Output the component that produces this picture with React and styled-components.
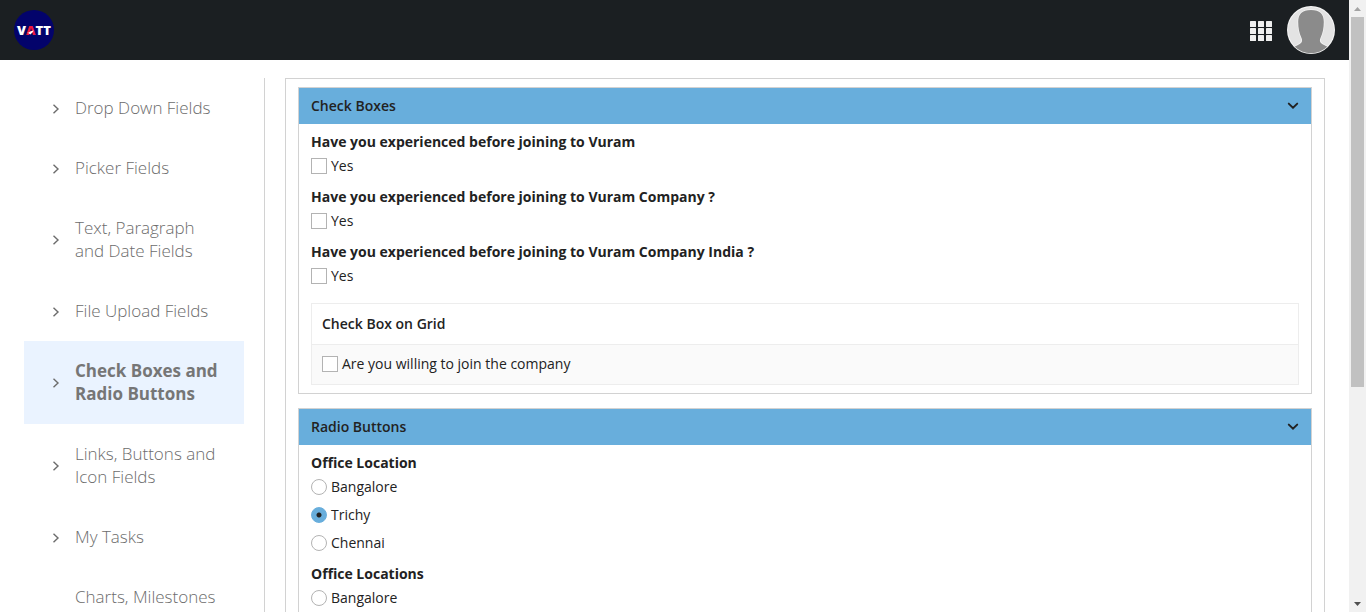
import React, { useId, useState } from "react";
import styled, { createGlobalStyle } from "styled-components";

const GlobalStyle = createGlobalStyle`
  * { box-sizing: border-box; }
  body {
    margin: 0;
    background: #fff;
    color: #222;
    font-family: "Open Sans", sans-serif;
    font-size: 14px;
    line-height: 20px;
  }
`;

const Screen = styled.div`
  display: flex;
  height: 100vh;
  overflow: hidden;
`;

const Page = styled.div`
  flex: 1;
  min-width: 0;
  overflow: hidden;
`;

const TopBar = styled.header`
  display: flex;
  align-items: center;
  gap: 15px;
  height: 60px;
  padding: 0 14px;
  background: #1b1f22;
`;

const HomeLink = styled.a`
  display: flex;
  margin-right: auto;
`;

const BarButton = styled.button`
  display: flex;
  padding: 0;
  border: 0;
  background: none;
  cursor: pointer;
`;

const Columns = styled.div`
  display: flex;
  align-items: stretch;
  padding: 18px 24px;
`;

const SideNav = styled.nav`
  flex: 0 0 241px;
  padding-right: 20px;
  border-right: 1px solid #d2d2d2;
`;

const NavLink = styled.a`
  display: flex;
  align-items: center;
  padding: 18px 20px 19px 28px;
  gap: 15px;
  color: ${(p) => (p.$active ? "#767676" : "#6c6c6c")};
  background: ${(p) => (p.$active ? "#eaf3ff" : "transparent")};
  font-size: 17px;
  font-weight: ${(p) => (p.$active ? 700 : 300)};
  line-height: 23px;
  text-decoration: none;
  &:last-child {
    min-height: 106px;
  }
`;

const NavArrow = styled.svg`
  flex: none;
`;

const NavText = styled.span`
  align-self: flex-start;
  white-space: pre-line;
`;

const Main = styled.main`
  flex: 1;
  min-width: 0;
  display: flex;
  flex-direction: column;
  gap: 14px;
  margin-left: 20px;
  padding: 8px 12px;
  border: 1px solid #d2d2d2;
`;

const Card = styled.section`
  border: 1px solid #d2d2d2;
`;

const CardHeading = styled.h2`
  margin: 0;
`;

const CardToggle = styled.button`
  display: flex;
  align-items: center;
  justify-content: space-between;
  width: 100%;
  height: 36px;
  padding: 0 12px;
  border: 0;
  background: #68aedc;
  color: #222;
  font: 600 14px/20px "Open Sans", sans-serif;
  cursor: pointer;
`;

const CardBody = styled.div`
  display: flex;
  flex-direction: column;
  gap: 11px;
  padding: 8px 12px;
`;

const Group = styled.fieldset`
  min-width: 0;
  margin: 0;
  padding: 0;
  border: 0;
`;

const Legend = styled.legend`
  margin-bottom: 4px;
  padding: 0;
  font-weight: 700;
`;

const Choices = styled.div`
  display: flex;
  flex-direction: column;
  gap: 8px;
`;

const Choice = styled.label`
  display: flex;
  align-items: center;
  gap: 4px;
`;

const CheckInput = styled.input`
  appearance: none;
  flex: none;
  width: 16px;
  height: 16px;
  margin: 0;
  border: 1px solid #b3b3b3;
  background: #fff;
  &:checked {
    border-color: #68aedc;
    background: #68aedc;
  }
`;

const RadioInput = styled(CheckInput)`
  border-radius: 50%;
  &:checked {
    background: radial-gradient(circle, #222 0 2px, #68aedc 3px);
  }
`;

const Grid = styled.table`
  width: 100%;
  margin-top: 6px;
  border: 1px solid #ededed;
  border-collapse: separate;
  border-spacing: 0;
`;

const GridHead = styled.th`
  padding: 10px;
  border-bottom: 1px solid #ededed;
  font-weight: 600;
  text-align: left;
`;

const GridCell = styled.td`
  padding: 9px 10px 10px;
  background: #fafafa;
`;

const ScrollTrack = styled.div`
  flex: 0 0 17px;
  display: flex;
  flex-direction: column;
  align-items: center;
  background: #f1f1f1;
`;

const ScrollThumb = styled.div`
  flex: 0 0 calc(61% - 3px);
  width: 13px;
  margin-bottom: auto;
  background: #c1c1c1;
`;

function Logo() {
  return (
    <svg width="40" height="40" viewBox="0 0 40 40" role="img" aria-label="VATT">
      <circle cx="20" cy="20" r="20" fill="#03036b" />
      <text x="20" y="25" textAnchor="middle" fontFamily="Open Sans, sans-serif" fontSize="13" fontWeight="800" fill="#fff">
        V<tspan fill="#f0183c">A</tspan>TT
      </text>
      <path d="M12.500 22q2 1.500 3 0q2-1.500 4.500-1.500l-3.500 4z" fill="#fff" />
    </svg>
  );
}

function AppsIcon() {
  const steps = [0, 1, 2];
  return (
    <svg width="22" height="22" viewBox="0 -2 22 22" fill="#efefef" aria-hidden="true">
      {steps.map((r) =>
        steps.map((c) => <rect key={`${r}${c}`} x={c * 8} y={r * 7} width="6" height="6" rx="0.5" />)
      )}
    </svg>
  );
}

function Avatar() {
  return (
    <svg width="48" height="48" viewBox="0 0 48 48" aria-hidden="true">
      <defs>
        <clipPath id="avatar-disc"><circle cx="24" cy="24" r="23.3" /></clipPath>
      </defs>
      <circle cx="24" cy="24" r="24" fill="#f5f5f5" />
      <g clipPath="url(#avatar-disc)">
        <circle cx="24" cy="24" r="23" fill="#e3e3e3" />
        <path
          d="M24 4C15 4 11.200 8 11.200 16c0 6 1 11 3.300 16 1.300 3 .5 5-3.500 7l-5 2.500V48h36v-6.500L37 39c-4-2-4.800-4-3.500-7 2.300-5 3.300-10 3.300-16C36.800 8 33 4 24 4z"
          fill="#8b8b8b"
          stroke="#f2f2f2"
          strokeWidth="1.500"
          paintOrder="stroke"
        />
      </g>
    </svg>
  );
}

function Chevron() {
  return (
    <svg width="12" height="9" viewBox="0 0 12 9" fill="none" stroke="#222" strokeWidth="2" strokeLinecap="round" aria-hidden="true">
      <path d="M1.800 1.600 6 5.600 10.200 1.600" />
    </svg>
  );
}

function ScrollArrow({ down }) {
  return (
    <svg width="17" height="17" viewBox="0 0 17 17" fill={down ? "#505050" : "#a3a3a3"} aria-hidden="true">
      <path d={down ? "M5 7h7l-3.5 4z" : "M5 11h7L8.5 7z"} />
    </svg>
  );
}

const NAV = [
  "Drop Down Fields",
  "Picker Fields",
  "Text, Paragraph\nand Date Fields",
  "File Upload Fields",
  "Check Boxes and\nRadio Buttons",
  "Links, Buttons and\nIcon Fields",
  "My Tasks",
  "Charts, Milestones",
];
const ACTIVE = NAV[4];

function Panel({ title, children }) {
  const [open, setOpen] = useState(true);
  return (
    <Card>
      <CardHeading>
        <CardToggle type="button" aria-expanded={open} onClick={() => setOpen(!open)}>
          {title}
          <Chevron />
        </CardToggle>
      </CardHeading>
      {open && <CardBody>{children}</CardBody>}
    </Card>
  );
}

function CheckField({ label }) {
  return (
    <Group>
      <Legend>{label}</Legend>
      <Choice>
        <CheckInput type="checkbox" />
        Yes
      </Choice>
    </Group>
  );
}

function RadioField({ label, options, selected }) {
  const name = useId();
  return (
    <Group>
      <Legend>{label}</Legend>
      <Choices>
        {options.map((o) => (
          <Choice key={o}>
            <RadioInput type="radio" name={name} defaultChecked={o === selected} />
            {o}
          </Choice>
        ))}
      </Choices>
    </Group>
  );
}

export default function App() {
  return (
    <Screen>
      <GlobalStyle />
      <Page>
        <TopBar>
          <HomeLink href="#home"><Logo /></HomeLink>
          <BarButton type="button" aria-label="Apps"><AppsIcon /></BarButton>
          <BarButton type="button" aria-label="Account"><Avatar /></BarButton>
        </TopBar>
        <Columns>
          <SideNav>
            {NAV.map((item) => (
              <NavLink key={item} href="#section" $active={item === ACTIVE}>
                <NavArrow width="8" height="12" viewBox="0 -2 8 12" fill="none" stroke="#6c6c6c" strokeWidth="1.4" aria-hidden="true">
                  <path d="M1.5 .8 6 5 1.5 9.2" />
                </NavArrow>
                <NavText>{item}</NavText>
              </NavLink>
            ))}
          </SideNav>
          <Main>
            <Panel title="Check Boxes">
              <CheckField label="Have you experienced before joining to Vuram" />
              <CheckField label="Have you experienced before joining to Vuram Company ?" />
              <CheckField label="Have you experienced before joining to Vuram Company India ?" />
              <Grid>
                <thead>
                  <tr><GridHead scope="col">Check Box on Grid</GridHead></tr>
                </thead>
                <tbody>
                  <tr>
                    <GridCell>
                      <Choice>
                        <CheckInput type="checkbox" />
                        Are you willing to join the company
                      </Choice>
                    </GridCell>
                  </tr>
                </tbody>
              </Grid>
            </Panel>
            <Panel title="Radio Buttons">
              <RadioField label="Office Location" options={["Bangalore", "Trichy", "Chennai"]} selected="Trichy" />
              <RadioField label="Office Locations" options={["Bangalore"]} />
            </Panel>
          </Main>
        </Columns>
      </Page>
      <ScrollTrack aria-hidden="true">
        <ScrollArrow />
        <ScrollThumb />
        <ScrollArrow down />
      </ScrollTrack>
    </Screen>
  );
}
